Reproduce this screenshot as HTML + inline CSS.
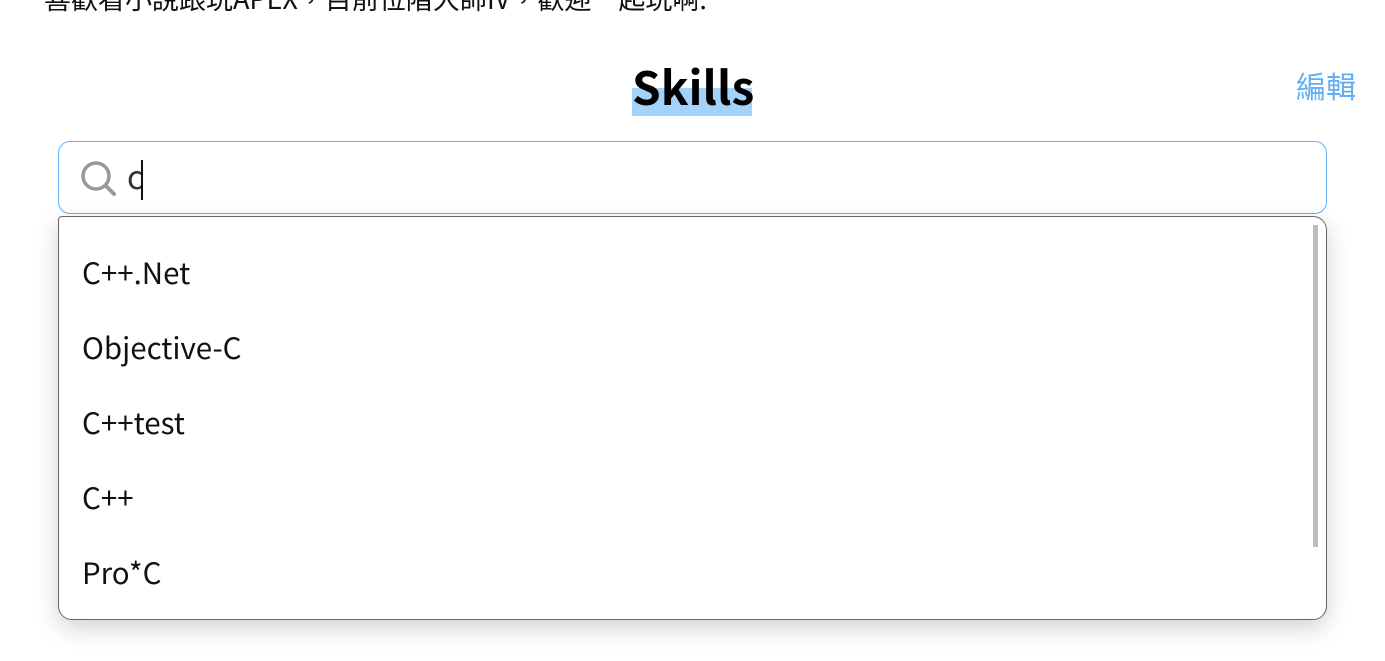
<!DOCTYPE html>
<html><head><meta charset="utf-8"><style>
body{margin:0;width:1385px;height:661px;overflow:hidden;background:#fff;font-family:"Liberation Sans","Noto Sans CJK TC",sans-serif;position:relative}
.top{position:absolute;left:44px;top:-22px;font-size:27px;color:#111;white-space:nowrap;font-family:"Noto Sans CJK TC",sans-serif}
.sk{position:absolute;left:632px;top:88px;width:120px;height:28px;background:#a3d3fb}
.skt{position:absolute;left:632px;top:54px;width:120px;text-align:center;font-size:46px;font-weight:bold;color:#000;font-family:"Noto Sans CJK TC",sans-serif;line-height:64px}
.ed{position:absolute;left:1296px;top:63px;font-size:30px;color:#62aef5;font-family:"Noto Sans CJK TC",sans-serif;line-height:44px}
.inp{position:absolute;left:58px;top:141px;width:1267px;height:71px;border:1px solid #66b1f6;border-radius:12px;background:#fff}
.c{position:absolute;left:68px;top:12px;font-size:32px;color:#333;font-family:"Noto Sans CJK TC",sans-serif;line-height:44px}
.caret{position:absolute;left:82px;top:18px;width:2px;height:40px;background:#111}
.dd{position:absolute;left:58px;top:216px;width:1267px;height:402px;border:1px solid #666;border-radius:4px 14px 14px 14px;background:#fff;box-shadow:0 8px 24px rgba(0,0,0,.18)}
.it{position:absolute;left:23px;font-size:29.5px;color:#111;font-family:"Noto Sans CJK TC",sans-serif;line-height:40px}
.sb{position:absolute;left:1254px;top:8px;width:5px;height:322px;background:#bdbdbd}
</style></head><body>
<div class="top">喜歡看小說跟玩APEX，目前位階大師IV，歡迎一起玩啊.</div>
<div class="sk"></div><div class="skt">Skills</div>
<div class="ed">編輯</div>
<div class="inp">
<svg style="position:absolute;left:21px;top:18px" width="38" height="38" viewBox="0 0 38 38"><circle cx="16" cy="16" r="13" fill="none" stroke="#999" stroke-width="3.5"/><path d="M25.5 25.5 L34 34" stroke="#999" stroke-width="4" stroke-linecap="round"/></svg>
<div class="c">c</div><div class="caret"></div>
</div>
<div class="dd">
<div class="it" style="top:35px">C++.Net</div>
<div class="it" style="top:110px">Objective-C</div>
<div class="it" style="top:185px">C++test</div>
<div class="it" style="top:260px">C++</div>
<div class="it" style="top:335px">Pro*C</div>
<div class="sb"></div>
</div>
</body></html>
